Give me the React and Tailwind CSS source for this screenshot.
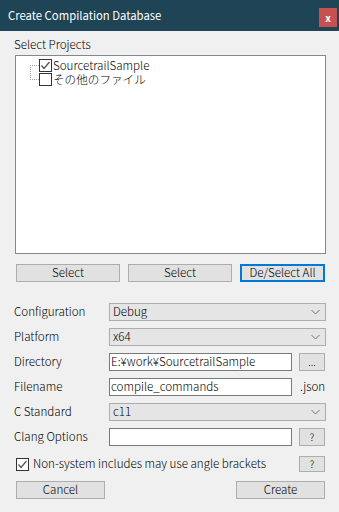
import React from "react";

const font = { fontFamily: '"Noto Sans CJK JP", "Noto Sans", sans-serif' };

const Chevron = () => (
  <svg width="9" height="6" viewBox="0 0 9 6" className="text-[#707070]">
    <polyline points="0.5,1 4.5,5 8.5,1" fill="none" stroke="currentColor" strokeWidth="1" />
  </svg>
);

const Check = ({ checked }) => (
  <span className="w-[13px] h-[13px] border border-[#333] bg-white flex items-center justify-center shrink-0">
    {checked && (
      <svg width="11" height="11" viewBox="0 0 11 11">
        <polyline points="1.5,5.5 4,8.5 9.5,2" fill="none" stroke="#555" strokeWidth="1.3" />
      </svg>
    )}
  </span>
);

const Combo = ({ value }) => (
  <div className="flex-1 h-[18px] bg-[#e5e5e5] border border-[#adadad] flex items-center justify-between pl-[3px] pr-[5px] text-[11.6px] leading-none text-black">
    <span>{value}</span>
    <Chevron />
  </div>
);

const Input = ({ value }) => (
  <div className="w-[183px] h-[18px] bg-white border border-[#7a7a7a] flex items-center px-[1px] text-[11.6px] leading-none text-black">
    {value}
  </div>
);

const SmallBtn = ({ label }) => (
  <div className="w-[26px] h-[18px] bg-[#e1e1e1] border border-[#adadad] flex items-center justify-center text-[10px] leading-none text-black">
    {label}
  </div>
);

const Row = ({ label, children }) => (
  <div className="flex items-center h-[18px]">
    <div className="w-[109px] pl-[14px] text-[11.6px] leading-none text-black shrink-0">{label}</div>
    {children}
  </div>
);

export default function App() {
  return (
    <div className="w-[339px] h-[512px] bg-[#f0f0f0] overflow-hidden font-light" style={font}>
      <div className="h-[31px] bg-[#1e4456] flex items-start justify-between pl-[8px] pr-[2px]">
        <span className="text-white text-[11.3px] font-normal leading-none mt-[10px]">Create Compilation Database</span>
        <div className="w-[18px] h-[19px] mt-[8px] bg-[#c75050] flex items-center justify-center text-white text-[10px] font-bold leading-none">x</div>
      </div>

      <div className="pl-[14px] mt-[6px] text-[11.6px] leading-[14px] text-black">Select Projects</div>

      <div className="ml-[15px] mr-[13px] mt-[4px] h-[199px] bg-white border border-[#828790] relative">
        <svg className="absolute left-[14px] top-[9px]" width="10" height="16" viewBox="0 0 10 16">
          <line x1="0.5" y1="0" x2="0.5" y2="14" stroke="#a0a0a0" strokeDasharray="1 1" />
          <line x1="0" y1="0.5" x2="9" y2="0.5" stroke="#a0a0a0" strokeDasharray="1 1" />
          <line x1="0" y1="14.5" x2="9" y2="14.5" stroke="#a0a0a0" strokeDasharray="1 1" />
        </svg>
        <div className="pl-[23px] pt-[2px] flex flex-col text-[11.6px] leading-[12px] text-black">
          <div className="flex items-center gap-[1px] h-[14px]">
            <Check checked />
            <span>SourcetrailSample</span>
          </div>
          <div className="flex items-center gap-[1px] h-[14px]">
            <Check />
            <span>その他のファイル</span>
          </div>
        </div>
      </div>

      <div className="flex gap-[8px] pl-[16px] mt-[10px] text-[11.6px] leading-none text-black">
        <div className="w-[104px] h-[18px] bg-[#e1e1e1] border border-[#adadad] flex items-center justify-center">Select</div>
        <div className="w-[104px] h-[18px] bg-[#e1e1e1] border border-[#adadad] flex items-center justify-center">Select</div>
        <div className="w-[85px] h-[18px] bg-[#e1e1e1] border-2 border-[#0078d7] flex items-center justify-center">De/Select All</div>
      </div>

      <div className="flex flex-col gap-[7px] mt-[21px] pr-[13px]">
        <Row label="Configuration">
          <Combo value="Debug" />
        </Row>
        <Row label="Platform">
          <Combo value="x64" />
        </Row>
        <Row label="Directory">
          <Input value="E:¥work¥SourcetrailSample" />
          <div className="ml-[7px]">
            <SmallBtn label="..." />
          </div>
        </Row>
        <Row label="Filename">
          <Input value="compile_commands" />
          <span className="ml-[8px] text-[11.6px] leading-none text-black">.json</span>
        </Row>
        <Row label="C Standard">
          <Combo value="c11" />
        </Row>
        <Row label="Clang Options">
          <Input value="" />
          <div className="ml-[7px]">
            <SmallBtn label="?" />
          </div>
        </Row>
      </div>

      <div className="flex items-center justify-between h-[16px] mt-[10px] pl-[16px] pr-[14px]">
        <div className="flex items-center gap-[4px] text-[11.6px] leading-none text-black">
          <Check checked />
          <span>Non-system includes may use angle brackets</span>
        </div>
        <div className="w-[26px] h-[16px] bg-[#e1e1e1] border border-[#adadad] flex items-center justify-center text-[10px] leading-none">?</div>
      </div>

      <div className="flex justify-between mt-[9px] pl-[16px] pr-[14px] text-[11.6px] leading-none text-black">
        <div className="w-[89px] h-[18px] bg-[#e1e1e1] border border-[#adadad] flex items-center justify-center">Cancel</div>
        <div className="w-[89px] h-[18px] bg-[#e1e1e1] border border-[#adadad] flex items-center justify-center">Create</div>
      </div>
    </div>
  );
}
